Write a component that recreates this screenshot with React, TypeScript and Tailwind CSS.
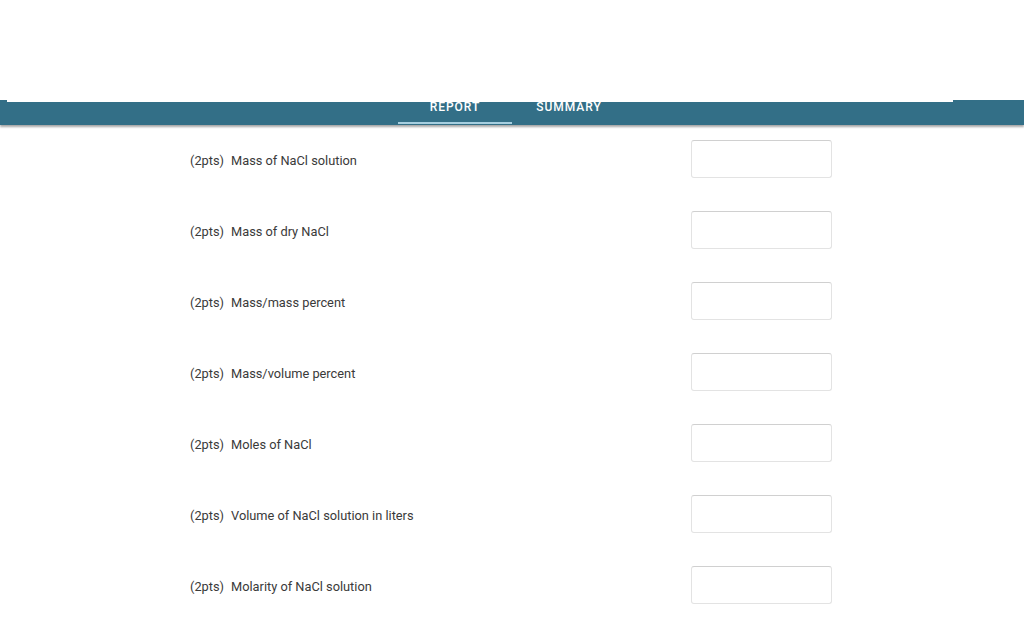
import React from 'react'

const rows = [
  'Mass of NaCl solution',
  'Mass of dry NaCl',
  'Mass/mass percent',
  'Mass/volume percent',
  'Moles of NaCl',
  'Volume of NaCl solution in liters',
  'Molarity of NaCl solution',
]

export default function App() {
  return (
    <div className="w-[1024px] h-[640px] overflow-hidden bg-white font-['Roboto',sans-serif]">
      <div className="h-[100px] bg-white" />

      {/* tab bar, top edge hidden under the white strip */}
      <div className="relative h-[25px] bg-[#336f87] shadow-[0_2px_2px_rgba(0,0,0,0.35)] z-10">
        <div className="absolute top-0 left-[7px] w-[946px] h-[2px] bg-white z-20" />
        <div className="flex justify-center h-full">
          <div className="relative w-[114px] pt-[1px] text-center text-white text-[12px] leading-[12px] font-medium tracking-[0.08em]">
            REPORT
            <div className="absolute left-0 right-0 bottom-[1px] h-[2px] bg-[#a6cfe0]" />
          </div>
          <div className="relative w-[114px] pt-[1px] text-center text-white text-[12px] leading-[12px] font-medium tracking-[0.08em]">
            SUMMARY
          </div>
        </div>
      </div>

      <div className="w-[642px] ml-[190px] pt-[15px]">
        {rows.map((label) => (
          <div key={label} className="flex justify-between items-center h-[38px] mb-[33px]">
            <div className="flex gap-[7px] pt-[3px] text-[12.8px] text-[#3a3a3a]">
              <span>(2pts)</span>
              <span>{label}</span>
            </div>
            <div className="w-[141px] h-[38px] rounded-[3px] border border-[#e3e3e3] border-t-[#d0d0d0] bg-white" />
          </div>
        ))}
      </div>
    </div>
  )
}
